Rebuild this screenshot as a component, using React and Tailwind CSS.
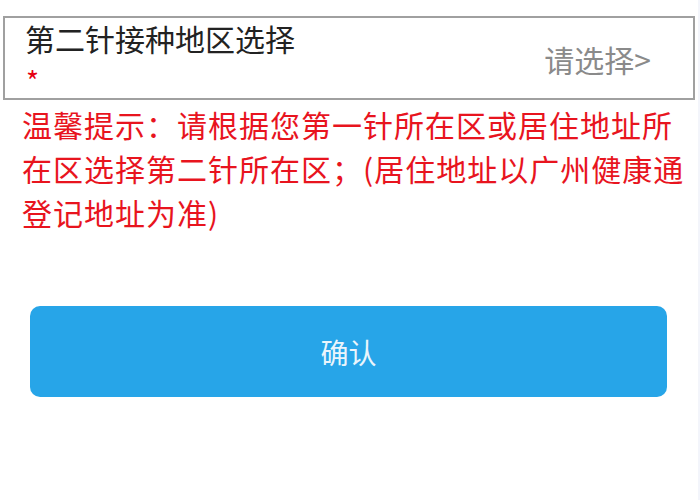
const font = { fontFamily: '"Noto Sans CJK SC", "Noto Sans", sans-serif' };

export default function App() {
  return (
    <div
      className="w-[700px] h-[500px] bg-white border-r-2 border-[#f3f5fb] overflow-hidden"
      style={font}
    >
      <div className="mt-4 mx-[3px] border-2 border-[#a0a0a0] h-[84px] flex justify-between">
        <div className="pl-5 flex flex-col">
          <p className="text-[30px] leading-[40px] text-[#222]">第二针接种地区选择</p>
          <p className="text-[28px] leading-[28px] text-[#e60012] pt-2 pl-px">*</p>
        </div>
        <div className="pr-[42px] pt-[21px] text-[30px] leading-[40px] text-[#8a8a8a]">
          请选择&gt;
        </div>
      </div>

      <p className="pl-[22px] pr-2 pt-0.5 text-[30px] leading-[44px] tracking-[1px] text-[#e8141e]">
        温馨提示：请根据您第一针所在区或居住地址所在区选择第二针所在区；(居住地址以广州健康通登记地址为准)
      </p>

      <div className="px-[30px] pt-[72px]">
        <button className="w-[637px] h-[91px] rounded-[10px] bg-[#27a5e8] text-[28px] text-[#eaf5fc]">
          确认
        </button>
      </div>
    </div>
  );
}
